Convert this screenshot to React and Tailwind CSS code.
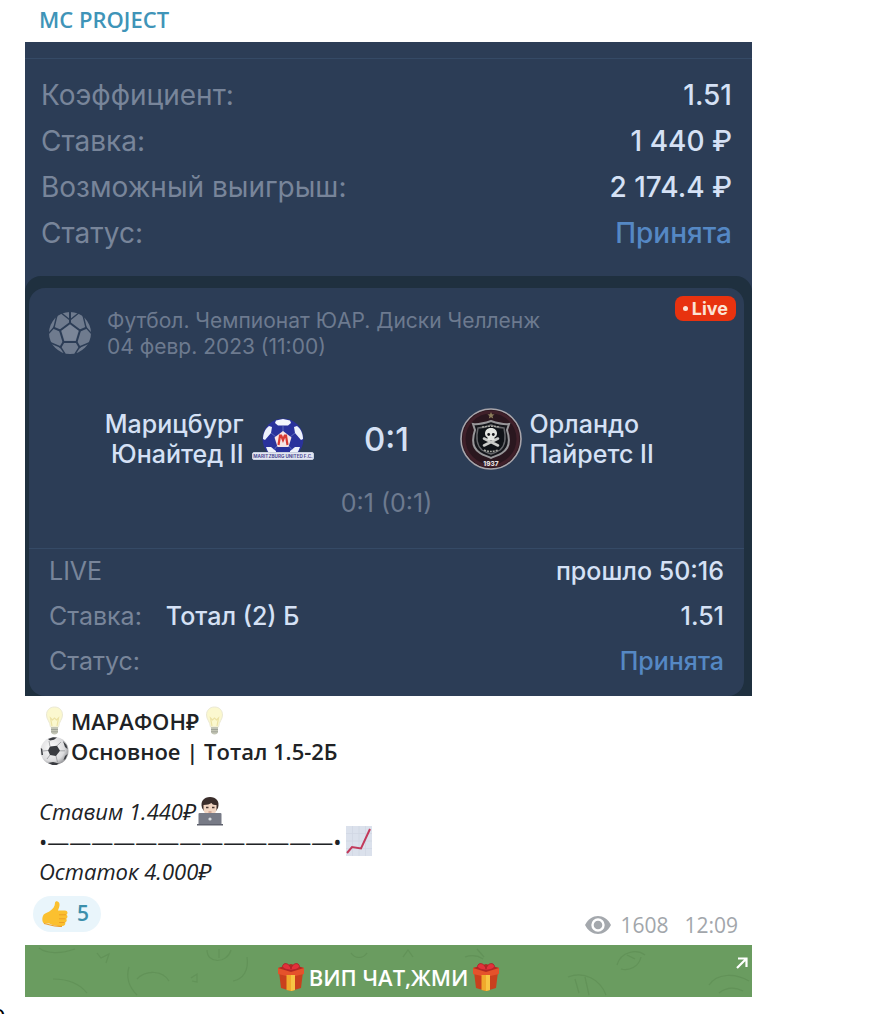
// App.jsx
import React from "react";

const BallIcon = ({ className }) => (
  <svg viewBox="0 0 42 42" className={className} aria-hidden="true">
    <circle cx="21" cy="21" r="21" fill="#6f7b8e" />
    <path d="M21 12.5 29.5 18.5 26.5 28.5H15.5L12.5 18.5Z" fill="#7b8698" />
    <g fill="none" stroke="#2c3d56" strokeWidth="2" strokeLinejoin="round">
      <path d="M21 11 31 18.500 27.500 30H14.500L11 18.500Z" />
      <path d="M21 0v11M31 18.500 38 15.500M27.500 30 31 36M14.500 30 11 36M11 18.500 4 15.500" />
      <path d="M11 0 21 8 31 0M34 3 37 15.500 43 22M40 31 30.500 35 26 42M16 42 11.500 35 2 31M-1 22 5 15.500 8 3" strokeWidth="1.400" />
    </g>
  </svg>
);

const MaritzburgLogo = ({ className }) => (
  <svg viewBox="0 0 62 42" className={className} aria-hidden="true">
    <circle cx="31" cy="21" r="20.500" fill="#2a329c" />
    <path d="M24 2.500 31 1l7 1.500 1 2.500-3 2.500H26L23 5Z" fill="#f3f6fd" />
    <path d="M17 8l3 1-1 6-6 7-2-1c0-5 2-10 6-13ZM45 8l-3 1 1 6 6 7 2-1c0-5-2-10-6-13Z" fill="#eef2fb" />
    <path d="M14 29l5 0 5 4v3h-6c-2-2-3-4-4-7ZM48 29l-5 0-5 4v3h6c2-2 3-4 4-7Z" fill="#eef2fb" />
    <path d="M31 8v6M19 15l5 4M43 15l-5 4M25 28l-3 4M37 28l3 4" stroke="#5a68bb" strokeWidth="1" />
    <path d="M31 13l8.500 6.500-3 9.500h-11l-3-9.500Z" fill="#f8e4e4" />
    <path d="M26.500 27l1.500-9.500h1.200L31 22l1.800-4.500H34L35.500 27" fill="none" stroke="#d83a34" strokeWidth="2.200" />
    <rect x="0.500" y="34.500" width="61" height="7" rx="1.500" fill="#e3e7f2" stroke="#c9cfe0" />
    <text x="31" y="40" textAnchor="middle" fontSize="4.600" fontWeight="700" fill="#4f4c94">
      MARITZBURG UNITED F.C.
    </text>
  </svg>
);

const PiratesLogo = ({ className }) => (
  <svg viewBox="0 0 62 62" className={className} aria-hidden="true">
    <circle cx="31" cy="31" r="30" fill="#2a171f" stroke="#a8a5ab" strokeWidth="1.600" />
    <circle cx="31" cy="31" r="27" fill="none" stroke="#40202a" strokeWidth="3" />
    <path d="M31 4l1 2.200 2.500.200-2 1.600.700 2.500L31 9.200l-2.200 1.300.700-2.500-2-1.600 2.500-.200Z" fill="#8d7d5c" />
    <path
      d="M13 16c6 1 12-1 18-3 6 2 12 4 18 3l-2 6c3 9 3 18-5 23-4 3-8 3-11 5-3-2-7-2-11-5-8-5-8-14-5-23Z"
      fill="#15161b"
      stroke="#98979a"
      strokeWidth="2"
    />
    <path
      d="M18 20c5 0 9-1 13-3 4 2 8 3 13 3 2 9 2 17-4 22-3 2-6 3-9 4-3-1-6-2-9-4-6-5-6-13-4-22Z"
      fill="#101318"
      stroke="#66676b"
      strokeWidth="1.400"
    />
    <path d="M24 30.500l14 7M38 30.500l-14 7" stroke="#c9cbc9" strokeWidth="2.600" strokeLinecap="round" />
    <path d="M31 20c-4 0-6 2.500-6 5.500 0 2 1 3 2.500 4V32h7v-2.500c1.500-1 2.500-2 2.500-4 0-3-2-5.500-6-5.500Z" fill="#e4e6e2" />
    <circle cx="28.700" cy="26.500" r="1.400" fill="#15161b" />
    <circle cx="33.300" cy="26.500" r="1.400" fill="#15161b" />
    <path d="M24 42c5 2 9 2 14 0" fill="none" stroke="#a6a69f" strokeWidth="1.600" strokeDasharray="2 1" />
    <path d="M22 19c6-1 12-1 18 0" fill="none" stroke="#a6a69f" strokeWidth="1.400" strokeDasharray="2 1" />
    <text x="31" y="58" textAnchor="middle" fontSize="6.500" fontWeight="800" fill="#e8e3e3">
      1937
    </text>
  </svg>
);

const Bulb = () => (
  <svg viewBox="0 0 32 30" className="h-[30px] w-8 shrink-0" aria-hidden="true">
    <path
      d="M15.500 1C10.500 1 7.500 4.500 7.500 9c0 4.500 3.500 6.500 4 12h8c.500-5.500 4-7.500 4-12 0-4.500-3-8-8-8Z"
      fill="#fbf8cf"
      stroke="#ebe9d4"
    />
    <path d="M13 20l-1.500-8 2 2 2-2 2 2 2-2L18 20" fill="none" stroke="#ece2a4" strokeWidth="1.200" />
    <path d="M12 21h7v4.500c0 2-1.500 3-3.500 3s-3.500-1-3.500-3Z" fill="#c3c5b5" />
    <path d="M12 23.500h7M12 25.800h7" stroke="#a0a398" />
  </svg>
);

const SoccerBall = () => (
  <svg viewBox="0 0 32 30" className="h-[30px] w-8 shrink-0" aria-hidden="true">
    <defs>
      <radialGradient id="ball" cx="0.4" cy="0.4" r="0.65">
        <stop offset="0" stopColor="#ffffff" />
        <stop offset="0.7" stopColor="#dcdcde" />
        <stop offset="1" stopColor="#8f9093" />
      </radialGradient>
    </defs>
    <circle cx="15.500" cy="15" r="14" fill="url(#ball)" />
    <g fill="#3a3c41">
      <path d="M11 10.500l7-.700 3 5-4 5.200-6-1-2-4.500Z" />
      <path d="M9 3l5-1.800 4 .300-3 2.200-4 .800ZM24 5l3.500 4 1 4-2.500-2ZM1.800 12l1.500 1 .700 6-1.500 0ZM28.500 18l-2 5-2 1 1.500-4ZM9 27l5-1 6 1.500-2.500 1.500h-4Z" />
    </g>
    <path d="M11 10.500 10 5M18 9.800 22 6M21 14.800h5M17 20l1.500 6M11 19l-3 4M9 14.500 4 15" stroke="#96979b" strokeWidth="0.800" fill="none" />
  </svg>
);

const Technologist = () => (
  <svg viewBox="0 0 28 30" className="h-[30px] w-7 shrink-0" aria-hidden="true">
    <path d="M5 27c0-7 4-9 9-9s9 2 9 9Z" fill="#8a97a6" />
    <path d="M6 12C4 5 8 1 14 1s10 4 8 11l-2 3H8Z" fill="#3a2d2b" />
    <path d="M7.500 9c4 0 6-1 8-2 1 2 3 2 5 2v4c0 4-3 6-6.500 6s-6.500-2-6.500-6Z" fill="#f1d5c2" />
    <path d="M10 11.500h2.500M16 11.500h2.500" stroke="#4a3731" strokeWidth="1.300" />
    <path d="M12.500 16h3" stroke="#b77d6e" />
    <rect x="2.500" y="17" width="23" height="12" rx="1" fill="#777a86" />
    <path d="M1 28h26v1.500H1Z" fill="#5e616d" />
    <circle cx="14" cy="23" r="1.600" fill="#d5d9dd" />
  </svg>
);

const Chart = () => (
  <svg viewBox="0 0 26 30" className="ml-1 h-[30px] w-[26px] shrink-0" aria-hidden="true">
    <rect width="26" height="30" fill="#dbe1ec" />
    <path d="M0 7.500h26M0 15h26M0 22.500h26M6.500 0v30M13 0v30M19.500 0v30" stroke="#d0d7e3" strokeWidth="0.800" />
    <path d="M1 27 6 21l9 1.500L24 3" fill="none" stroke="#c23a5b" strokeWidth="2" />
  </svg>
);

const ThumbUp = () => (
  <svg viewBox="0 0 28 28" className="size-7 shrink-0" aria-hidden="true">
    <path
      d="M2 16c1-3 4-3 7-5 3-2 5-5 5-8 0-2.500 4-2.500 4.500 1 .300 2.500-1 4.500-1.500 6.500h7c3 0 3 3.500 1.500 4.200 1.500 1 1.200 3.300-.300 4 1 1.300.500 3.200-1 3.700.500 2-.700 3.600-3 3.600-6 0-9-.500-13-2.500L3 23.500C1 22 1 18 2 16Z"
      fill="#fbc02f"
    />
    <path d="M18 14.800h7M18 18.800h6.500M18 22.500h5.500" stroke="#eda024" fill="none" />
    <path d="M3 23.500c6 1 9 3.500 18 2.800" stroke="#ee9f2b" fill="none" strokeWidth="1.200" />
  </svg>
);

const Gift = () => (
  <svg viewBox="1 0 28 30" className="h-[30px] w-7 shrink-0" aria-hidden="true">
    <path d="M3 10h24l-2 16-10 3-10-3Z" fill="#c9401d" />
    <path d="M2 6l13-3 13 3v6l-13 3L2 12Z" fill="#e5522b" />
    <path d="M2 6l13 4 13-4-13-4Z" fill="#b32a22" />
    <path d="M10.500 13h8.500v15l-4 1-4.500-1Z" fill="#f0a92c" />
    <path d="M15 13h4v15l-4 1Z" fill="#f7c544" />
    <path d="M15 8C10 8 5 6 7 3s7-1 8 4c1-5 6-7 8-4s-3 5-8 5Z" fill="#e2323a" stroke="#a9202a" strokeWidth="0.800" />
  </svg>
);

const EyeIcon = () => (
  <svg viewBox="0 0 28 20" className="h-5 w-7" aria-hidden="true">
    <path d="M1 10C7-2 21-2 27 10 21 22 7 22 1 10Z" fill="#a4a8ad" />
    <circle cx="14" cy="10" r="5.500" fill="none" stroke="#fff" strokeWidth="2.400" />
  </svg>
);

const Doodles = () => (
  <svg
    viewBox="0 0 727 52"
    preserveAspectRatio="xMidYMid slice"
    className="absolute inset-0 h-full w-full"
    fill="none"
    stroke="#5f8f55"
    strokeWidth="1.200"
    opacity="0.7"
    aria-hidden="true"
  >
    <path d="M14 3c8 6 22 6 36 1M28 34c14 0 26 4 34 14M72 8l4 5 8-4-3 9M104 22c-3 10 0 20 8 28M112 34c10-10 26-8 32 2M182 5c0 14 20 14 24 0M194 4v9M222 12c2 14-4 22-14 24M166 33l6-4v8l-5-1" />
    <path d="M440 12c6-2 12-2 18 2M452 4l7 8M543 32c16-6 32 2 38 18M550 34l4 14M560 32l4 18M592 20c4-14 20-16 28-10M596 24c8 2 18-2 20-12M602 10l8 4M684 40c8-12 26-12 40-4M694 48c8-6 16-6 24-2M326 8c4 6 12 6 16 0M378 12l5-7 5 7" />
  </svg>
);

const Row = ({ label, extra, value, accent }) => (
  <div className="flex items-center justify-between">
    <dt className="text-[#78859a]">{label}</dt>
    {extra && (
      <dd className="mr-auto ml-6 font-medium text-[#d5e1f5]">{extra}</dd>
    )}
    <dd
      className={
        accent ? "font-medium text-[#5588c4]" : "font-medium text-[#d5e1f5]"
      }
    >
      {value}
    </dd>
  </div>
);

const BetSummary = () => (
  <dl className="mt-4 border-t border-[#354a66] pt-[13px] pr-5 pb-5 pl-4 text-[28px] leading-[46px]">
    <Row label="Коэффициент:" value="1.51" />
    <Row label="Ставка:" value="1 440 ₽" />
    <Row label="Возможный выигрыш:" value="2 174.4 ₽" />
    <Row label="Статус:" value="Принята" accent />
  </dl>
);

const MatchCard = () => (
  <div className="rounded-t-2xl bg-[#1f303f] pt-3 pr-2 pl-1">
    <div className="rounded-2xl bg-[#2c3d56]">
      <div className="flex items-start pt-2 pr-2 pl-5">
        <BallIcon className="mt-4 size-[42px] shrink-0" />
        <p className="mt-3 ml-4 flex-1 text-[21px] leading-[26px] text-[#6d7a8f]">
          Футбол. Чемпионат ЮАР. Диски Челленж
          <br />
          04 февр. 2023 (11:00)
        </p>
        <span className="flex h-[25px] items-center gap-1 rounded-lg bg-[#e8320f] px-2 text-[18px] font-bold text-[#fbe3d5]">
          <span className="size-[5px] rounded-full bg-[#fbe3d5]" />
          Live
        </span>
      </div>

      <div className="mt-12 grid grid-cols-[1fr_146px_1fr] items-center text-[25px] leading-[30px] font-medium text-[#d5e1f5]">
        <div className="flex items-center justify-end gap-2">
          <p className="text-right">
            Марицбург
            <br />
            Юнайтед II
          </p>
          <MaritzburgLogo className="h-[42px] w-[62px]" />
        </div>
        <p className="text-center text-[33px]">0:1</p>
        <div className="flex items-center gap-2">
          <PiratesLogo className="size-[62px]" />
          <p>
            Орландо
            <br />
            Пайретс II
          </p>
        </div>
      </div>
      <p className="mt-4 text-center text-[25px] leading-[34px] text-[#6d7a8f]">
        0:1 (0:1)
      </p>

      <dl className="mt-7 border-t border-[#354a66] px-5 pb-3 text-[25px] leading-[45px]">
        <Row label="LIVE" value="прошло 50:16" />
        <Row label="Ставка:" extra="Тотал (2) Б" value="1.51" />
        <Row label="Статус:" value="Принята" accent />
      </dl>
    </div>
  </div>
);

const Message = () => (
  <div className="px-[14px] pt-[10px] text-[22px] leading-[30px] text-[#202225]">
    <p className="flex items-center font-semibold">
      <Bulb />
      МАРАФОН₽
      <Bulb />
    </p>
    <p className="flex items-center font-semibold">
      <SoccerBall />
      Основное | Тотал 1.5-2Б
    </p>
    <p className="mt-[30px] flex items-center italic">
      Ставим 1.440₽
      <Technologist />
    </p>
    <p className="flex items-center">
      •—————————————•
      <Chart />
    </p>
    <p className="italic">Остаток 4.000₽</p>
  </div>
);

const App = () => {
  return (
    <main className="h-screen overflow-hidden bg-white font-['Open_Sans','Noto_Sans',sans-serif]">
      <article className="mr-[126px] ml-[25px]">
        <h1 className="h-[42px] px-[14px] pt-1 text-[22px] leading-[30px] font-semibold text-[#3f94b8]">
          MC PROJECT
        </h1>

        <section className="overflow-hidden bg-[#2c3d56] font-['Inter',sans-serif]">
          <BetSummary />
          <MatchCard />
        </section>

        <Message />

        <footer className="flex items-end justify-between pt-[10px] pr-[14px] pb-[13px] pl-2">
          <button
            type="button"
            className="flex h-9 items-center gap-2 rounded-full bg-[#e9f5fb] px-2 pr-3 text-[21px] font-semibold text-[#3b8fab]"
          >
            <ThumbUp />5
          </button>
          <div className="-mb-2 flex items-center text-[21px] leading-[30px] text-[#a2a6ab]">
            <EyeIcon />
            <span className="ml-2">1608</span>
            <span className="ml-4">12:09</span>
          </div>
        </footer>

        <button
          type="button"
          className="relative block h-[52px] w-full overflow-hidden bg-[#6a9c60] text-[22px] leading-[30px] font-semibold text-white"
        >
          <Doodles />
          <span className="relative flex items-center justify-center gap-1 pt-3">
            <Gift />
            <span>ВИП ЧАТ,ЖМИ</span>
            <Gift />
          </span>
          <svg
            viewBox="0 0 12 12"
            className="absolute top-3 right-1 size-3"
            fill="none"
            stroke="#fff"
            strokeWidth="2.200"
            aria-hidden="true"
          >
            <path d="M2 1.500h8.500V10M10 2 1 11" />
          </svg>
        </button>
      </article>
      <p className="-ml-[9px] text-[24px] leading-[32px] text-black">о</p>
    </main>
  );
};

export default App;
